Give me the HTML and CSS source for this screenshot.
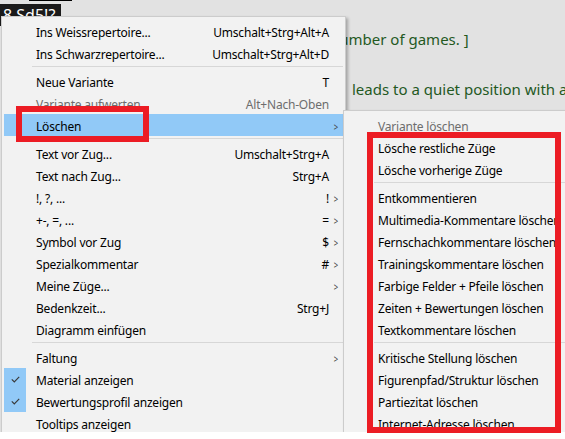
FILE: index.html
```html
<!DOCTYPE html>
<html lang="de">
<head>
<meta charset="utf-8">
<title>Kontextmenü</title>
<link rel="stylesheet" href="styles.css">
</head>
<body>
<div class="page">
  <div class="screen">
    <div class="doc">
      <div class="topbar"></div>
      <div class="tag">8 Sd5!?</div>
      <div class="line l1">number of games. ]</div>
      <div class="line l2">leads to a quiet position with a</div>
      <div class="line l3">move order which is more flexible than the main line of</div>
    </div>

    <div class="menu main">
      <div class="item"><span class="icon"></span><span class="label">Ins Weissrepertoire...</span><span class="key">Umschalt+Strg+Alt+A</span><span class="arrow"></span></div>
      <div class="item"><span class="icon"></span><span class="label">Ins Schwarzrepertoire...</span><span class="key">Umschalt+Strg+Alt+D</span><span class="arrow"></span></div>
      <div class="sep"></div>
      <div class="item"><span class="icon"></span><span class="label">Neue Variante</span><span class="key">T</span><span class="arrow"></span></div>
      <div class="item disabled"><span class="icon"></span><span class="label">Variante aufwerten</span><span class="key">Alt+Nach-Oben</span><span class="arrow"></span></div>
      <div class="item active"><span class="icon"></span><span class="label">Löschen</span><span class="key"></span><span class="arrow">&gt;</span></div>
      <div class="sep"></div>
      <div class="item"><span class="icon"></span><span class="label">Text vor Zug...</span><span class="key">Umschalt+Strg+A</span><span class="arrow"></span></div>
      <div class="item"><span class="icon"></span><span class="label">Text nach Zug...</span><span class="key">Strg+A</span><span class="arrow"></span></div>
      <div class="item"><span class="icon"></span><span class="label">!, ?, ...</span><span class="key">!</span><span class="arrow">&gt;</span></div>
      <div class="item"><span class="icon"></span><span class="label">+-, =, ...</span><span class="key">=</span><span class="arrow">&gt;</span></div>
      <div class="item"><span class="icon"></span><span class="label">Symbol vor Zug</span><span class="key">$</span><span class="arrow">&gt;</span></div>
      <div class="item"><span class="icon"></span><span class="label">Spezialkommentar</span><span class="key">#</span><span class="arrow">&gt;</span></div>
      <div class="item"><span class="icon"></span><span class="label">Meine Züge...</span><span class="key"></span><span class="arrow">&gt;</span></div>
      <div class="item"><span class="icon"></span><span class="label">Bedenkzeit...</span><span class="key">Strg+J</span><span class="arrow"></span></div>
      <div class="item"><span class="icon"></span><span class="label">Diagramm einfügen</span><span class="key"></span><span class="arrow"></span></div>
      <div class="sep"></div>
      <div class="item"><span class="icon"></span><span class="label">Faltung</span><span class="key"></span><span class="arrow">&gt;</span></div>
      <div class="item"><span class="icon checked"><svg width="9" height="7" viewBox="0 0 9 7"><path d="M0.8 3.4 L3.3 5.9 L8.2 0.9" fill="none" stroke="#3a3a3a" stroke-width="1.2"/></svg></span><span class="label">Material anzeigen</span><span class="key"></span><span class="arrow"></span></div>
      <div class="item"><span class="icon checked"><svg width="9" height="7" viewBox="0 0 9 7"><path d="M0.8 3.4 L3.3 5.9 L8.2 0.9" fill="none" stroke="#3a3a3a" stroke-width="1.2"/></svg></span><span class="label">Bewertungsprofil anzeigen</span><span class="key"></span><span class="arrow"></span></div>
      <div class="item"><span class="icon"></span><span class="label">Tooltips anzeigen</span><span class="key"></span><span class="arrow"></span></div>
    </div>

    <div class="menu sub">
      <div class="item disabled"><span class="icon"></span><span class="label">Variante löschen</span></div>
      <div class="item"><span class="icon"></span><span class="label">Lösche restliche Züge</span></div>
      <div class="item"><span class="icon"></span><span class="label">Lösche vorherige Züge</span></div>
      <div class="sep"></div>
      <div class="item"><span class="icon"></span><span class="label">Entkommentieren</span></div>
      <div class="item"><span class="icon"></span><span class="label">Multimedia-Kommentare löschen</span></div>
      <div class="item"><span class="icon"></span><span class="label">Fernschachkommentare löschen</span></div>
      <div class="item"><span class="icon"></span><span class="label">Trainingskommentare löschen</span></div>
      <div class="item"><span class="icon"></span><span class="label">Farbige Felder + Pfeile löschen</span></div>
      <div class="item"><span class="icon"></span><span class="label">Zeiten + Bewertungen löschen</span></div>
      <div class="item"><span class="icon"></span><span class="label">Textkommentare löschen</span></div>
      <div class="sep"></div>
      <div class="item"><span class="icon"></span><span class="label">Kritische Stellung löschen</span></div>
      <div class="item"><span class="icon"></span><span class="label">Figurenpfad/Struktur löschen</span></div>
      <div class="item"><span class="icon"></span><span class="label">Partiezitat löschen</span></div>
      <div class="item"><span class="icon"></span><span class="label">Internet-Adresse löschen</span></div>
    </div>
  </div>

  <div class="mark mark-main"></div>
  <div class="mark mark-sub"></div>
</div>
</body>
</html>
```

FILE: styles.css
```css
html, body {
  margin: 0;
  padding: 0;
  background: #ffffff;
}

.page {
  position: relative;
  width: 565px;
  height: 439px;
  overflow: hidden;
}

.screen {
  position: relative;
  height: 432px;
  overflow: hidden;
  background: #e2e2e2;
  font-family: "Noto Sans", "DejaVu Sans", sans-serif;
}

/* document behind the menus */
.doc {
  display: flex;
  flex-direction: column;
  align-items: flex-start;
}

.topbar {
  width: 43px;
  height: 1px;
  margin-left: 29px;
  background: #000;
}

.tag {
  margin-top: 3px;
  background: #1b1b1b;
  color: #ffffff;
  font-size: 16px;
  line-height: 22px;
  height: 22px;
  padding: 0 6px 0 3px;
  white-space: nowrap;
}

.line {
  white-space: nowrap;
  font-size: 15px;
  line-height: 25px;
  color: #24591f;
}

.l1 { margin-top: 1px; margin-left: 330px; }
.l2 { margin-top: 25px; margin-left: 352px; }
.l3 { margin-top: 3px; margin-left: 300px; }

/* menus */
.menu {
  position: absolute;
  box-sizing: border-box;
  background: #f2f2f2;
  border: 1px solid #cccccc;
  padding: 3px 2px;
  box-shadow: 2px 2px 3px rgba(0, 0, 0, 0.28);
  font-size: 12px;
  letter-spacing: -0.2px;
  color: #000;
}

.main {
  left: 1px;
  top: 16px;
  width: 345px;
}

.sub {
  left: 343px;
  top: 110px;
  width: 240px;
}

.item {
  display: flex;
  align-items: center;
  height: 22px;
  white-space: nowrap;
}

.icon {
  flex: 0 0 22px;
  height: 22px;
  margin-right: 10px;
  display: flex;
  align-items: center;
  justify-content: center;
}

.icon.checked {
  background: #91c9f7;
}

.label,
.key,
.arrow {
  padding-top: 2px;
}

.label {
  flex: 1;
}

.key {
  text-align: right;
}

.arrow {
  flex: 0 0 14px;
  text-align: center;
  color: #444;
  font-size: 11px;
  transform: scaleX(0.7);
}

.item.active {
  background: #91c9f7;
}

.item.disabled {
  color: #6d6d6d;
}

.sep {
  height: 1px;
  margin: 2px 0 3px 28px;
  background: #d7d7d7;
}

/* red annotation boxes */
.mark {
  position: absolute;
  box-sizing: border-box;
  border: 6px solid #ec1c24;
}

.mark-main {
  left: 16px;
  top: 106px;
  width: 133px;
  height: 36px;
}

.mark-sub {
  left: 367px;
  top: 132px;
  width: 194px;
  height: 301px;
}
```
